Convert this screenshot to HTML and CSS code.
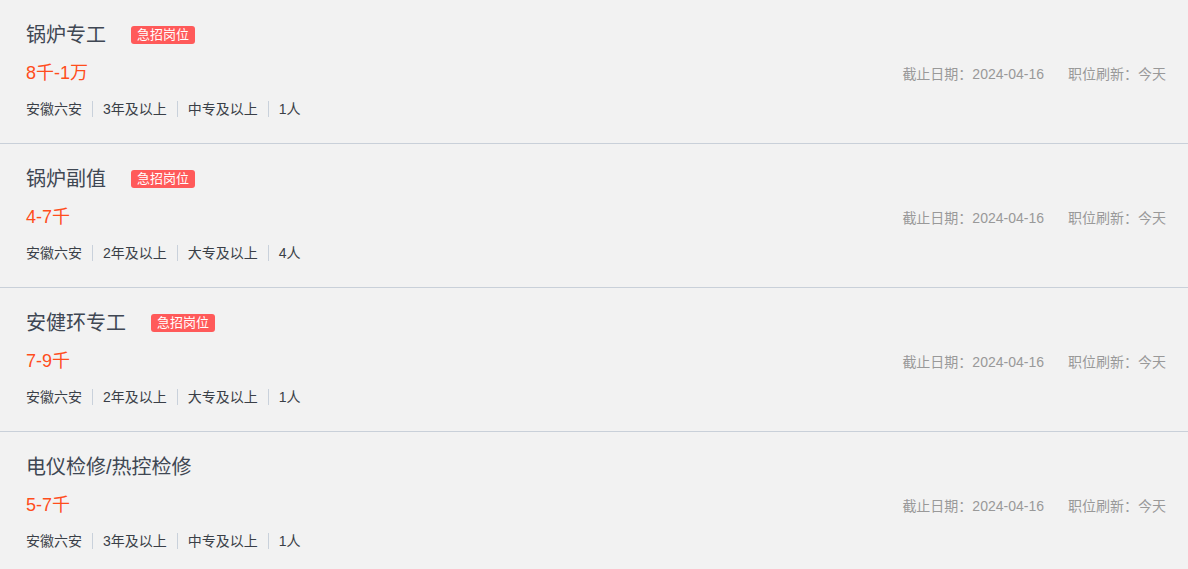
FILE: index.html
```html
<!DOCTYPE html>
<html lang="zh-CN">
<head>
<meta charset="utf-8">
<title>职位列表</title>
<link rel="stylesheet" href="styles.css">
</head>
<body>
<ul class="job-list">
  <li class="job">
    <div class="job-title-row"><span class="job-title">锅炉专工</span><span class="badge">急招岗位</span></div>
    <div class="job-mid">
      <span class="salary">8千-1万</span>
      <div class="meta"><span>截止日期：2024-04-16</span><span class="refresh">职位刷新：今天</span></div>
    </div>
    <div class="tags"><span class="tag">安徽六安</span><span class="tag">3年及以上</span><span class="tag">中专及以上</span><span class="tag">1人</span></div>
  </li>
  <li class="job">
    <div class="job-title-row"><span class="job-title">锅炉副值</span><span class="badge">急招岗位</span></div>
    <div class="job-mid">
      <span class="salary">4-7千</span>
      <div class="meta"><span>截止日期：2024-04-16</span><span class="refresh">职位刷新：今天</span></div>
    </div>
    <div class="tags"><span class="tag">安徽六安</span><span class="tag">2年及以上</span><span class="tag">大专及以上</span><span class="tag">4人</span></div>
  </li>
  <li class="job">
    <div class="job-title-row"><span class="job-title">安健环专工</span><span class="badge">急招岗位</span></div>
    <div class="job-mid">
      <span class="salary">7-9千</span>
      <div class="meta"><span>截止日期：2024-04-16</span><span class="refresh">职位刷新：今天</span></div>
    </div>
    <div class="tags"><span class="tag">安徽六安</span><span class="tag">2年及以上</span><span class="tag">大专及以上</span><span class="tag">1人</span></div>
  </li>
  <li class="job">
    <div class="job-title-row"><span class="job-title">电仪检修/热控检修</span></div>
    <div class="job-mid">
      <span class="salary">5-7千</span>
      <div class="meta"><span>截止日期：2024-04-16</span><span class="refresh">职位刷新：今天</span></div>
    </div>
    <div class="tags"><span class="tag">安徽六安</span><span class="tag">3年及以上</span><span class="tag">中专及以上</span><span class="tag">1人</span></div>
  </li>
</ul>
</body>
</html>
```
FILE: styles.css
```css
html, body {
  margin: 0;
  padding: 0;
  background: #f2f2f2;
  font-family: "Liberation Sans", Arial, "Noto Sans CJK SC", sans-serif;
}
.job-list {
  list-style: none;
  margin: 0;
  padding: 0;
}
.job {
  padding: 21px 22px 24px 26px;
  border-bottom: 1px solid #c9d0d9;
}
.job-title-row {
  display: flex;
  align-items: center;
  height: 28px;
}
.job-title {
  font-size: 20px;
  line-height: 28px;
  color: #3f4753;
}
.badge {
  margin-left: 25px;
  height: 18px;
  line-height: 18px;
  padding: 0 6px;
  border-radius: 3px;
  background: #ff5a5a;
  color: #fff;
  font-size: 13px;
}
.job-mid {
  display: flex;
  justify-content: space-between;
  align-items: center;
  margin-top: 12px;
  height: 24px;
}
.salary {
  font-size: 18px;
  line-height: 24px;
  color: #ff4d1c;
}
.meta {
  display: flex;
  font-size: 14px;
  color: #999;
}
.refresh {
  margin-left: 24px;
}
.tags {
  display: flex;
  align-items: center;
  margin-top: 14px;
  height: 20px;
  font-size: 14px;
  color: #3a3f47;
}
.tag {
  padding: 0 10px;
  line-height: 20px;
  border-left: 1px solid #c9d1db;
  height: 16px;
  display: flex;
  align-items: center;
}
.tag:first-child {
  padding-left: 0;
  border-left: none;
}
```
